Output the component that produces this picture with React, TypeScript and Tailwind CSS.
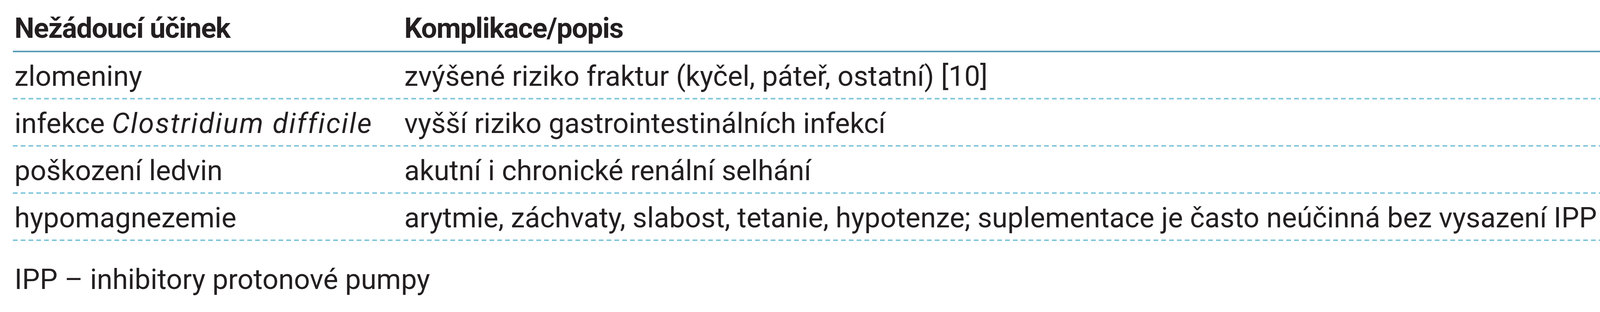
const rows = [
  { effect: <>zlomeniny</>, desc: "zvýšené riziko fraktur (kyčel, páteř, ostatní) [10]" },
  {
    effect: (
      <>
        infekce <em className="italic tracking-[3px]">Clostridium difficile</em>
      </>
    ),
    desc: "vyšší riziko gastrointestinálních infekcí",
  },
  { effect: <>poškození ledvin</>, desc: "akutní i chronické renální selhání" },
  {
    effect: <>hypomagnezemie</>,
    desc: "arytmie, záchvaty, slabost, tetanie, hypotenze; suplementace je často neúčinná bez vysazení IPP",
  },
]

export default function App() {
  return (
    <div className="min-h-[800px] bg-white pt-[37px] pl-[33px] font-['Roboto',sans-serif] text-[72px] leading-[72px] text-[#231f20]">
      <div className="w-[4070px]">
        {/* header row */}
        <div className="grid grid-cols-[998px_1fr] pb-[21px] font-bold tracking-[-1.5px]">
          <div className="pl-[4px]">Nežádoucí účinek</div>
          <div className="pl-[4px]">Komplikace/popis</div>
        </div>
        <div className="h-[4px] bg-[#5a9cb8]" />
        {rows.map((r, i) => (
          <div key={i}>
            <div className="grid grid-cols-[998px_1fr] pt-[26px] pb-[19px] whitespace-nowrap">
              <div className="pl-[4px]">{r.effect}</div>
              <div className="pl-[4px]">{r.desc}</div>
            </div>
            <div className="h-[4px] bg-[image:repeating-linear-gradient(90deg,#82c7db_0px,#82c7db_12px,transparent_12px,transparent_20px)]" />
          </div>
        ))}
      </div>
      <p className="mt-[63px] pl-[4px]">IPP – inhibitory protonové pumpy</p>
    </div>
  )
}
